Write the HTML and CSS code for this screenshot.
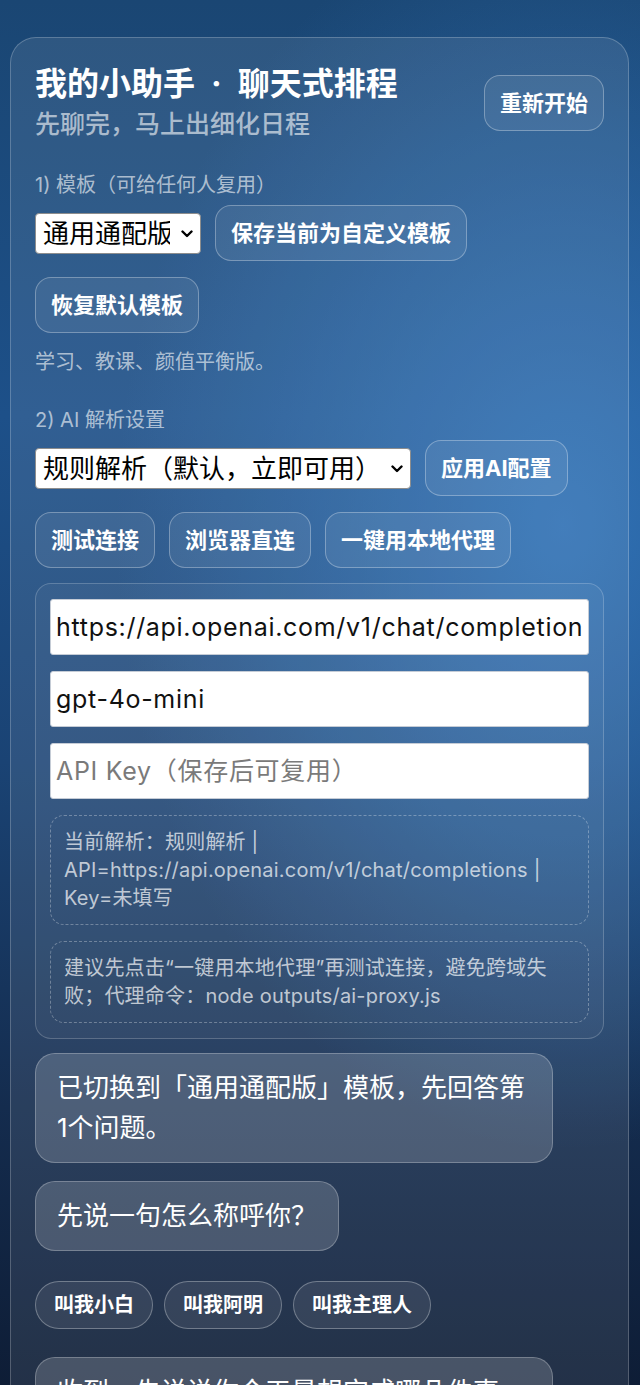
FILE: index.html
```html
<!DOCTYPE html>
<html lang="zh-CN">
<head>
<meta charset="utf-8">
<title>我的小助手 · 聊天式排程</title>
<link rel="stylesheet" href="styles.css">
</head>
<body>
<main class="card">
  <header class="head">
    <div class="head-text">
      <h1 class="title">我的小助手<span class="dot">·</span>聊天式排程</h1>
      <p class="subtitle">先聊完，马上出细化日程</p>
    </div>
    <button class="btn">重新开始</button>
  </header>

  <section class="section">
    <div class="label">1) 模板（可给任何人复用）</div>
    <div class="row">
      <span class="select-wrap sel-tpl">
        <select class="select"><option>通用通配版</option></select>
        <svg class="chev" viewBox="0 0 12 8" width="12" height="8"><path d="M1.5 1.5 6 6l4.5-4.5" fill="none" stroke="#000" stroke-width="2.4" stroke-linecap="round" stroke-linejoin="round"/></svg>
      </span>
      <button class="btn">保存当前为自定义模板</button>
      <button class="btn">恢复默认模板</button>
    </div>
    <p class="desc">学习、教课、颜值平衡版。</p>
  </section>

  <section class="section">
    <div class="label">2) AI 解析设置</div>
    <div class="row">
      <span class="select-wrap sel-ai">
        <select class="select"><option>规则解析（默认，立即可用）</option></select>
        <svg class="chev" viewBox="0 0 12 8" width="12" height="8"><path d="M1.5 1.5 6 6l4.5-4.5" fill="none" stroke="#000" stroke-width="2.4" stroke-linecap="round" stroke-linejoin="round"/></svg>
      </span>
      <button class="btn">应用AI配置</button>
      <button class="btn">测试连接</button>
      <button class="btn">浏览器直连</button>
      <button class="btn">一键用本地代理</button>
    </div>

    <div class="panel">
      <input class="field" type="text" value="https://api.openai.com/v1/chat/completions">
      <input class="field" type="text" value="gpt-4o-mini">
      <input class="field" type="text" placeholder="API Key（保存后可复用）">
      <div class="info">当前解析：规则解析 | API=https://api.openai.com/v1/chat/completions | Key=未填写</div>
      <div class="info">建议先点击“一键用本地代理”再测试连接，避免跨域失败；代理命令：node outputs/ai-proxy.js</div>
    </div>
  </section>

  <section class="chat">
    <div class="bubble">已切换到「通用通配版」模板，先回答第1个问题。</div>
    <div class="bubble">先说一句怎么称呼你？</div>
    <div class="chips">
      <button class="chip">叫我小白</button>
      <button class="chip">叫我阿明</button>
      <button class="chip">叫我主理人</button>
    </div>
    <div class="bubble">收到，先说说你今天最想完成哪几件事，我会帮你排进日程。</div>
  </section>
</main>
</body>
</html>
```

FILE: styles.css
```css
* { box-sizing: border-box; }

html, body {
  margin: 0;
  min-height: 100%;
}

body {
  padding: 37px 11px 40px 10px;
  font-family: Inter, "Noto Sans CJK SC", sans-serif;
  color: #fff;
  background:
    radial-gradient(ellipse 70% 45% at 88% 38%, rgba(52, 120, 190, 0.85) 0%, rgba(52, 120, 190, 0) 100%),
    linear-gradient(180deg, #1a4673 0%, #1d5089 30%, #1a4374 55%, #142c4e 80%, #0e1d36 100%);
  background-attachment: fixed;
}

.card {
  border: 1px solid rgba(255, 255, 255, 0.22);
  border-radius: 26px;
  background: rgba(255, 255, 255, 0.09);
  padding: 25px 24px 30px;
}

.head {
  display: flex;
  justify-content: space-between;
  align-items: center;
  gap: 16px;
}

.title {
  margin: 0;
  font-size: 32px;
  line-height: 42px;
  font-weight: 700;
  white-space: nowrap;
}

.dot { margin: 0 16px; }

.subtitle {
  margin: 0;
  font-size: 25px;
  line-height: 38px;
  color: rgba(255, 255, 255, 0.6);
  font-weight: 500;
}

.section { margin-top: 27px; }
.section + .section { margin-top: 28px; }

.label {
  font-size: 20px;
  line-height: 30px;
  color: rgba(255, 255, 255, 0.62);
  margin-bottom: 5px;
}

.row {
  display: flex;
  flex-wrap: wrap;
  align-items: center;
  gap: 16px 14px;
}

.desc {
  margin: 14px 0 0;
  font-size: 20px;
  line-height: 30px;
  color: rgba(255, 255, 255, 0.62);
}

.btn {
  font-family: inherit;
  font-size: 22px;
  line-height: 30px;
  font-weight: 700;
  color: #fff;
  padding: 12px 15px;
  border: 1px solid rgba(255, 255, 255, 0.3);
  border-radius: 16px;
  background: rgba(255, 255, 255, 0.07);
  white-space: nowrap;
}

.select-wrap {
  position: relative;
  display: inline-block;
}

.sel-tpl { width: 166px; }
.sel-ai { width: 376px; }

.select {
  appearance: none;
  -webkit-appearance: none;
  width: 100%;
  height: 41px;
  font-family: inherit;
  font-size: 26px;
  padding: 0 30px 0 7px;
  border: 1px solid #8d8d8d;
  border-radius: 4px;
  background: #fff;
  color: #000;
}

.chev {
  position: absolute;
  right: 8px;
  top: 17px;
  pointer-events: none;
}

.panel {
  margin-top: 15px;
  padding: 15px 14px;
  border: 1px solid rgba(255, 255, 255, 0.2);
  border-radius: 16px;
  background: rgba(255, 255, 255, 0.04);
  display: flex;
  flex-direction: column;
  gap: 16px;
}

.field {
  width: 100%;
  height: 56px;
  font-family: inherit;
  font-size: 25px;
  letter-spacing: 0.7px;
  padding: 0 5px;
  border: 1px solid #c5ccd6;
  border-radius: 3px;
  background: #fff;
  color: #111;
}

.field::placeholder { color: #7a7a7a; }

.info {
  border: 1px dashed rgba(255, 255, 255, 0.3);
  border-radius: 14px;
  padding: 12px 13px;
  font-size: 20px;
  line-height: 28px;
  letter-spacing: 0.2px;
  color: rgba(255, 255, 255, 0.7);
}

.chat {
  margin-top: 14px;
  display: flex;
  flex-direction: column;
  align-items: flex-start;
  gap: 18px;
}

.bubble {
  max-width: 91%;
  padding: 14px 21px;
  font-size: 26px;
  line-height: 40px;
  border: 1px solid rgba(255, 255, 255, 0.25);
  border-radius: 20px;
  background: rgba(255, 255, 255, 0.17);
}

.chips {
  display: flex;
  flex-wrap: wrap;
  gap: 11px;
  margin: 12px 0 10px;
}

.chip {
  font-family: inherit;
  font-size: 20px;
  line-height: 28px;
  font-weight: 700;
  color: #fff;
  padding: 9px 18px;
  border: 1px solid rgba(255, 255, 255, 0.3);
  border-radius: 24px;
  background: rgba(255, 255, 255, 0.08);
}
```
